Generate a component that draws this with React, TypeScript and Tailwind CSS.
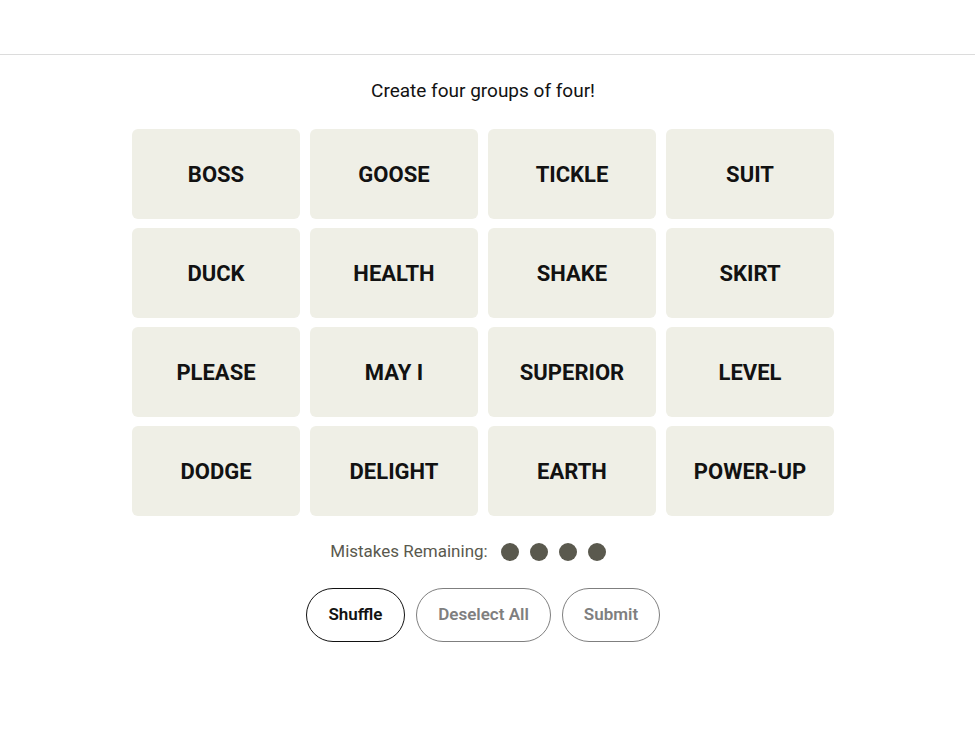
import React from "react";

const words = [
  "BOSS", "GOOSE", "TICKLE", "SUIT",
  "DUCK", "HEALTH", "SHAKE", "SKIRT",
  "PLEASE", "MAY I", "SUPERIOR", "LEVEL",
  "DODGE", "DELIGHT", "EARTH", "POWER-UP",
];

export default function App() {
  return (
    <div className="min-h-[742px] w-full bg-white" style={{ fontFamily: "Roboto, 'Liberation Sans', sans-serif" }}>
      <div className="h-[55px] border-b border-[#dcdcdc]" />
      <div className="flex flex-col items-center pr-[9px]">
        <p className="mt-[23px] text-[19px] leading-[26px] text-[#121212]">Create four groups of four!</p>
        <div className="mt-[25px] grid w-[702px] grid-cols-4 gap-x-[10px] gap-y-[9px]">
          {words.map((w) => (
            <div
              key={w}
              className="flex h-[90px] items-center justify-center rounded-[6px] bg-[#efefe6] text-[22px] font-bold text-[#121212]"
            >
              {w}
            </div>
          ))}
        </div>
        <div className="mt-[23px] mr-[30px] flex items-center text-[17px] text-[#5a594e]">
          <span>Mistakes Remaining:</span>
          <div className="ml-[13px] flex gap-[11px]">
            <span className="h-[18px] w-[18px] rounded-full bg-[#5a594e]" />
            <span className="h-[18px] w-[18px] rounded-full bg-[#5a594e]" />
            <span className="h-[18px] w-[18px] rounded-full bg-[#5a594e]" />
            <span className="h-[18px] w-[18px] rounded-full bg-[#5a594e]" />
          </div>
        </div>
        <div className="mt-[23px] flex gap-[11px]">
          <button className="h-[54px] w-[99px] rounded-full border border-[#121212] text-[17px] font-semibold text-[#121212]">
            Shuffle
          </button>
          <button className="h-[54px] w-[135px] rounded-full border border-[#7f7f7f] text-[17px] font-semibold text-[#7f7f7f]">
            Deselect All
          </button>
          <button className="h-[54px] w-[98px] rounded-full border border-[#7f7f7f] text-[17px] font-semibold text-[#7f7f7f]">
            Submit
          </button>
        </div>
      </div>
    </div>
  );
}
